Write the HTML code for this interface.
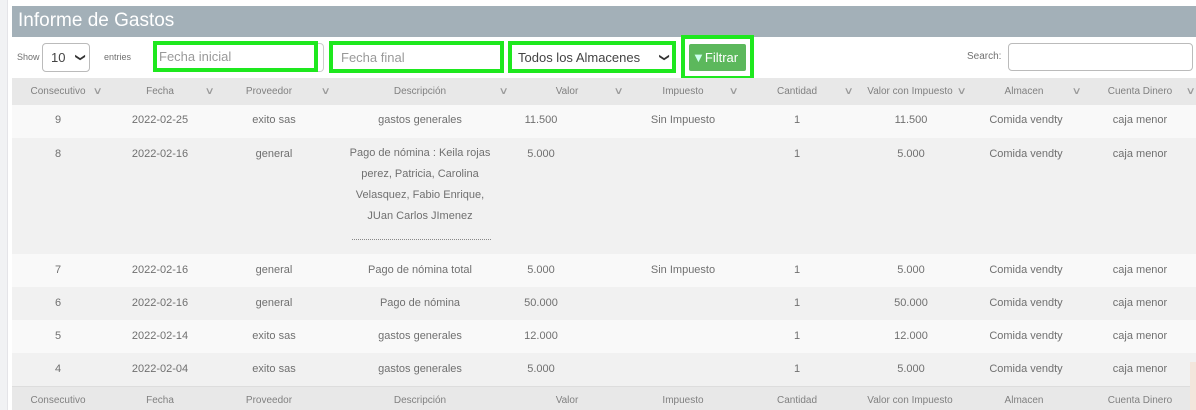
<!DOCTYPE html>
<html><head><meta charset="utf-8"><style>
*{box-sizing:border-box;margin:0;padding:0}
body{width:1196px;height:410px;overflow:hidden;background:#fff;font-family:"Liberation Sans",sans-serif;color:#707070;position:relative}
.strip{position:absolute;left:0;top:0;width:8px;height:410px;background:#f1f2f4;border-right:1px solid #e4e4e8}
.hdr{position:absolute;left:12px;top:6px;width:1184px;height:31px;background:#a3b0b8;color:#fff;font-size:19px;padding:4px 6px}
.a{position:absolute;white-space:nowrap}
.row{position:absolute;left:12px;width:1184px}
.c{position:absolute;transform:translateX(-50%);font-size:11px;white-space:nowrap}
.h{font-size:10px;color:#808080}
.ar{position:absolute;font-size:10px;color:#999;transform:scaleX(1.4)}
.g{border:4px solid #1ee81e}
.chev{display:inline-block;transform:rotate(90deg);font-size:10px;color:#333}
</style></head><body>
<div class="strip"></div>
<div class="hdr">Informe de Gastos</div>
<div class="a" style="left:17px;top:52px;font-size:9px">Show</div>
<div class="a" style="left:42px;top:43px;width:48px;height:29px;border:1px solid #bbb;border-radius:4px;font-size:13px;padding:6px 0 0 8px;color:#444">10<span class="chev" style="position:absolute;left:33px;top:8px">&#10095;</span></div>
<div class="a" style="left:104px;top:52px;font-size:9px">entries</div>
<div class="a g" style="left:153px;top:41px;width:165px;height:31px;font-size:13px;color:#999;padding:4px 2px">Fecha inicial</div>
<div class="a" style="left:318px;top:43px;width:6px;height:29px;border:1px solid #ccc;border-left:none;border-radius:0 4px 4px 0"></div>
<div class="a g" style="left:329px;top:41px;width:175px;height:32px;font-size:13px;color:#999;padding:5px 8px">Fecha final</div>
<div class="a g" style="left:508px;top:41px;width:168px;height:32px;font-size:13px;color:#444;padding:5px 6px">Todos los Almacenes<span class="chev" style="position:absolute;left:148px;top:7px">&#10095;</span></div>
<div class="a g" style="left:681px;top:35px;width:73px;height:45px;padding:5px 4px"><div style="background:#5cb85c;color:#fff;font-size:13px;height:27px;padding:6px 3px;border-radius:2px"><span style="color:#cfe;font-size:13px">&#9660;</span>Filtrar</div></div>
<div class="a" style="left:967px;top:51px;font-size:10px">Search:</div>
<div class="a" style="left:1008px;top:43px;width:185px;height:28px;border:1px solid #bbb;border-radius:4px"></div>

<div class="row" style="top:78px;height:27px;background:#e8e8e8"></div>
<div class="row" style="top:105px;height:33px;background:#f9f9f9"></div>
<div class="row" style="top:138px;height:116px;background:#f1f1f1"></div>
<div class="row" style="top:254px;height:33px;background:#f9f9f9"></div>
<div class="row" style="top:287px;height:33px;background:#f1f1f1"></div>
<div class="row" style="top:320px;height:33px;background:#f9f9f9"></div>
<div class="row" style="top:353px;height:33px;background:#f1f1f1"></div>
<div class="row" style="top:386px;height:24px;background:#e8e8e8;border-top:1px solid #ddd"></div>

<div style="position:absolute;top:86px">
<div class="c h" style="left:58px">Consecutivo</div><div class="ar" style="left:94px">&#8744;</div>
<div class="c h" style="left:160px">Fecha</div><div class="ar" style="left:206px">&#8744;</div>
<div class="c h" style="left:269px">Proveedor</div><div class="ar" style="left:322px">&#8744;</div>
<div class="c h" style="left:420px">Descripción</div><div class="ar" style="left:500px">&#8744;</div>
<div class="c h" style="left:567px">Valor</div><div class="ar" style="left:615px">&#8744;</div>
<div class="c h" style="left:683px">Impuesto</div><div class="ar" style="left:730px">&#8744;</div>
<div class="c h" style="left:797px">Cantidad</div><div class="ar" style="left:845px">&#8744;</div>
<div class="c h" style="left:910px">Valor con Impuesto</div><div class="ar" style="left:958px">&#8744;</div>
<div class="c h" style="left:1024px">Almacen</div><div class="ar" style="left:1073px">&#8744;</div>
<div class="c h" style="left:1140px">Cuenta Dinero</div><div class="ar" style="left:1187px">&#8744;</div>
</div>
<div style="position:absolute;top:395px">
<div class="c h" style="left:58px">Consecutivo</div><div class="c h" style="left:160px">Fecha</div><div class="c h" style="left:269px">Proveedor</div><div class="c h" style="left:420px">Descripción</div><div class="c h" style="left:567px">Valor</div><div class="c h" style="left:683px">Impuesto</div><div class="c h" style="left:797px">Cantidad</div><div class="c h" style="left:910px">Valor con Impuesto</div><div class="c h" style="left:1024px">Almacen</div><div class="c h" style="left:1140px">Cuenta Dinero</div>
</div>

<div style="position:absolute;top:114px">
<div class="c" style="left:58px">9</div><div class="c" style="left:160px">2022-02-25</div><div class="c" style="left:274px">exito sas</div><div class="c" style="left:420px">gastos generales</div><div class="c" style="left:541px">11.500</div><div class="c" style="left:683px">Sin Impuesto</div><div class="c" style="left:797px">1</div><div class="c" style="left:911px">11.500</div><div class="c" style="left:1026px">Comida vendty</div><div class="c" style="left:1140px">caja menor</div>
</div>
<div style="position:absolute;top:148px">
<div class="c" style="left:58px">8</div><div class="c" style="left:160px">2022-02-16</div><div class="c" style="left:274px">general</div><div class="c" style="left:420px;top:-5px;line-height:21px;text-align:center">Pago de nómina : Keila rojas<br>perez, Patricia, Carolina<br>Velasquez, Fabio Enrique,<br>JUan Carlos JImenez</div><div class="a" style="left:352px;top:91px;width:139px;border-top:1px dotted #888"></div><div class="c" style="left:541px">5.000</div><div class="c" style="left:797px">1</div><div class="c" style="left:911px">5.000</div><div class="c" style="left:1026px">Comida vendty</div><div class="c" style="left:1140px">caja menor</div>
</div>
<div style="position:absolute;top:264px">
<div class="c" style="left:58px">7</div><div class="c" style="left:160px">2022-02-16</div><div class="c" style="left:274px">general</div><div class="c" style="left:420px">Pago de nómina total</div><div class="c" style="left:541px">5.000</div><div class="c" style="left:683px">Sin Impuesto</div><div class="c" style="left:797px">1</div><div class="c" style="left:911px">5.000</div><div class="c" style="left:1026px">Comida vendty</div><div class="c" style="left:1140px">caja menor</div>
</div>
<div style="position:absolute;top:297px">
<div class="c" style="left:58px">6</div><div class="c" style="left:160px">2022-02-16</div><div class="c" style="left:274px">general</div><div class="c" style="left:420px">Pago de nómina</div><div class="c" style="left:541px">50.000</div><div class="c" style="left:797px">1</div><div class="c" style="left:911px">50.000</div><div class="c" style="left:1026px">Comida vendty</div><div class="c" style="left:1140px">caja menor</div>
</div>
<div style="position:absolute;top:330px">
<div class="c" style="left:58px">5</div><div class="c" style="left:160px">2022-02-14</div><div class="c" style="left:274px">exito sas</div><div class="c" style="left:420px">gastos generales</div><div class="c" style="left:541px">12.000</div><div class="c" style="left:797px">1</div><div class="c" style="left:911px">12.000</div><div class="c" style="left:1026px">Comida vendty</div><div class="c" style="left:1140px">caja menor</div>
</div>
<div style="position:absolute;top:363px">
<div class="c" style="left:58px">4</div><div class="c" style="left:160px">2022-02-04</div><div class="c" style="left:274px">exito sas</div><div class="c" style="left:420px">gastos generales</div><div class="c" style="left:541px">5.000</div><div class="c" style="left:797px">1</div><div class="c" style="left:911px">5.000</div><div class="c" style="left:1026px">Comida vendty</div><div class="c" style="left:1140px">caja menor</div>
</div>
<div class="a" style="left:1190px;top:362px;width:6px;height:48px;background:#f3e6dc"></div>
</body></html>
